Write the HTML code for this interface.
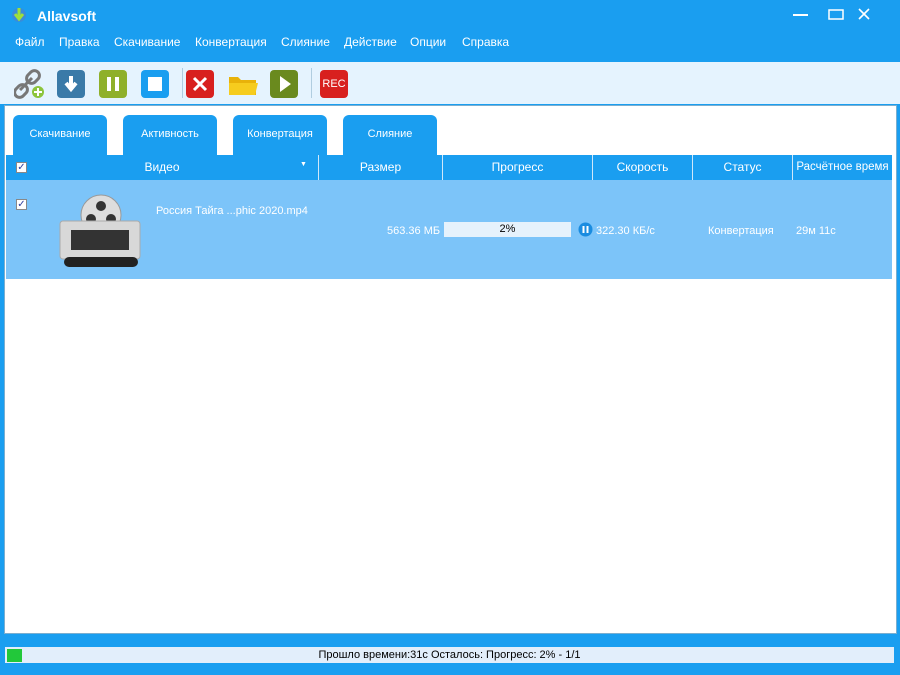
<!DOCTYPE html>
<html><head><meta charset="utf-8"><style>
*{margin:0;padding:0;box-sizing:border-box}
body{width:900px;height:675px;overflow:hidden;background:#1a9ef0;font-family:"Liberation Sans","DejaVu Sans",sans-serif;position:relative}
.abs{position:absolute}
.title{left:37px;top:8px;color:#fff;font-weight:bold;font-size:14px}
.menu{top:35px;color:#fff;font-size:12px}
.tb{top:62px;left:0;width:900px;height:42px;background:#e5f3fe}
.panel{left:4px;top:105px;width:893px;height:529px;background:#fff;border:1px solid #7aaed0}
.btn{top:70px;width:28px;height:28px;border-radius:4px}
.tab{top:115px;height:41px;background:#1a9ef0;border-radius:6px 6px 0 0;color:#fff;font-size:11px;padding-top:13px;text-align:center}
.hdr{left:6px;top:155px;width:886px;height:25px;background:#1a9ef0}
.hc{top:155px;height:25px;color:#fff;font-size:12px;text-align:center;line-height:25px;border-left:1px solid #d0e8fa}
.row{left:6px;top:180px;width:886px;height:99px;background:#7cc4f9}
.cell{color:#fff;font-size:11px}
.cb{width:11px;height:11px;background:#fff;border:1px solid #888;font-size:10px;line-height:9px;color:#3040a0;text-align:center}
</style></head><body>
<svg class="abs" style="left:11px;top:6px" width="16" height="18"><circle cx="8" cy="9" r="7" fill="#3a8cd8"/><path d="M8 2v9M4 8l4 5 4-5" stroke="#9ee03a" stroke-width="3" fill="none"/></svg>
<div class="abs title">Allavsoft</div>
<svg class="abs" style="left:793px;top:8px" width="100" height="14"><rect x="0" y="6" width="15" height="2" fill="#fff"/><rect x="36" y="2" width="14" height="9" fill="none" stroke="#fff" stroke-width="1.5"/><path d="M66 1l10 10M76 1l-10 10" stroke="#fff" stroke-width="1.6"/></svg>
<div class="abs menu" style="left:15px">Файл</div>
<div class="abs menu" style="left:59px">Правка</div>
<div class="abs menu" style="left:114px">Скачивание</div>
<div class="abs menu" style="left:195px">Конвертация</div>
<div class="abs menu" style="left:281px">Слияние</div>
<div class="abs menu" style="left:344px">Действие</div>
<div class="abs menu" style="left:410px">Опции</div>
<div class="abs menu" style="left:462px">Справка</div>
<div class="abs tb"></div>
<svg class="abs" style="left:14px;top:68px" width="32" height="32"><path d="M6 22l12-12" stroke="#777" stroke-width="3"/><rect x="2" y="16" width="10" height="14" rx="5" transform="rotate(45 7 23)" fill="none" stroke="#777" stroke-width="3"/><rect x="14" y="2" width="10" height="14" rx="5" transform="rotate(45 19 9)" fill="none" stroke="#777" stroke-width="3"/><circle cx="24" cy="24" r="6" fill="#8cc43c"/><path d="M24 20v8M20 24h8" stroke="#fff" stroke-width="2"/></svg>
<div class="abs btn" style="left:57px;background:#3a7aa8"><svg width="28" height="28"><path d="M14 6v11M9 13l5 6 5-6" stroke="#fff" stroke-width="4" fill="none"/></svg></div>
<div class="abs btn" style="left:99px;background:#8fb02a"><svg width="28" height="28"><rect x="8" y="7" width="4" height="14" fill="#fff"/><rect x="16" y="7" width="4" height="14" fill="#fff"/></svg></div>
<div class="abs btn" style="left:141px;background:#1a9ef0"><svg width="28" height="28"><rect x="7" y="7" width="14" height="14" fill="#fff"/></svg></div>
<div class="abs" style="left:182px;top:68px;width:1px;height:30px;background:#b0cde0"></div>
<div class="abs btn" style="left:186px;background:#d8201e"><svg width="28" height="28"><path d="M8 8l12 12M20 8L8 20" stroke="#fff" stroke-width="3"/></svg></div>
<svg class="abs" style="left:228px;top:73px" width="30" height="24"><path d="M1 4h9l3 3h15v15H1z" fill="#e8b20a"/><path d="M1 10h29l-3 12H1z" fill="#f6cc1e"/></svg>
<div class="abs btn" style="left:270px;background:#6a8a1e"><svg width="28" height="28"><path d="M10 6l11 8-11 8z" fill="#fff"/></svg></div>
<div class="abs" style="left:311px;top:68px;width:1px;height:30px;background:#b0cde0"></div>
<div class="abs btn" style="left:320px;background:#d8201e;color:#fff;font-size:11px;line-height:28px;text-align:center">REC</div>
<div class="abs panel"></div>
<div class="abs tab" style="left:13px;width:94px">Скачивание</div>
<div class="abs tab" style="left:123px;width:94px">Активность</div>
<div class="abs tab" style="left:233px;width:94px">Конвертация</div>
<div class="abs tab" style="left:343px;width:94px">Слияние</div>
<div class="abs hdr"></div>
<div class="abs cb" style="left:16px;top:162px">✓</div>
<div class="abs hc" style="left:6px;width:312px;border:0">Видео</div>
<div class="abs" style="left:300px;top:161px;color:#fff;font-size:7px">▼</div>
<div class="abs hc" style="left:318px;width:124px">Размер</div>
<div class="abs hc" style="left:442px;width:150px">Прогресс</div>
<div class="abs hc" style="left:592px;width:100px">Скорость</div>
<div class="abs hc" style="left:692px;width:100px">Статус</div>
<div class="abs hc" style="left:792px;width:100px;font-size:11.5px">Расчётное время</div>
<div class="abs row"></div>
<div class="abs cb" style="left:16px;top:199px">✓</div>
<svg class="abs" style="left:58px;top:193px" width="84" height="76"><circle cx="43" cy="22" r="20" fill="#ddd" stroke="#999"/><circle cx="43" cy="13" r="5" fill="#333"/><circle cx="33" cy="26" r="5" fill="#333"/><circle cx="53" cy="26" r="5" fill="#333"/><rect x="2" y="28" width="80" height="38" rx="3" fill="#d8d8d8" stroke="#aaa"/><rect x="13" y="37" width="58" height="20" fill="#333"/><rect x="6" y="64" width="74" height="10" rx="5" fill="#222"/></svg>
<div class="abs cell" style="left:156px;top:205px">Россия Тайга ...phic 2020.mp4</div>
<div class="abs cell" style="left:387px;top:225px">563.36 МБ</div>
<div class="abs" style="left:444px;top:222px;width:127px;height:15px;background:#e6f2fc;font-size:11px;text-align:center;line-height:15px;color:#000">2%</div>
<svg class="abs" style="left:578px;top:222px" width="15" height="15"><circle cx="7.5" cy="7.5" r="7" fill="#1a8ce0"/><rect x="4.5" y="4" width="2" height="7" fill="#fff"/><rect x="8.5" y="4" width="2" height="7" fill="#fff"/></svg>
<div class="abs cell" style="left:596px;top:225px">322.30 КБ/с</div>
<div class="abs cell" style="left:708px;top:225px">Конвертация</div>
<div class="abs cell" style="left:796px;top:225px">29м 11с</div>
<div class="abs" style="left:5px;top:647px;width:889px;height:16px;background:#e2eefb;font-size:11px;text-align:center;line-height:16px;color:#000">Прошло времени:31с Осталось: Прогресс: 2% - 1/1</div>
<div class="abs" style="left:7px;top:649px;width:15px;height:13px;background:#22c83a"></div>
</body></html>
